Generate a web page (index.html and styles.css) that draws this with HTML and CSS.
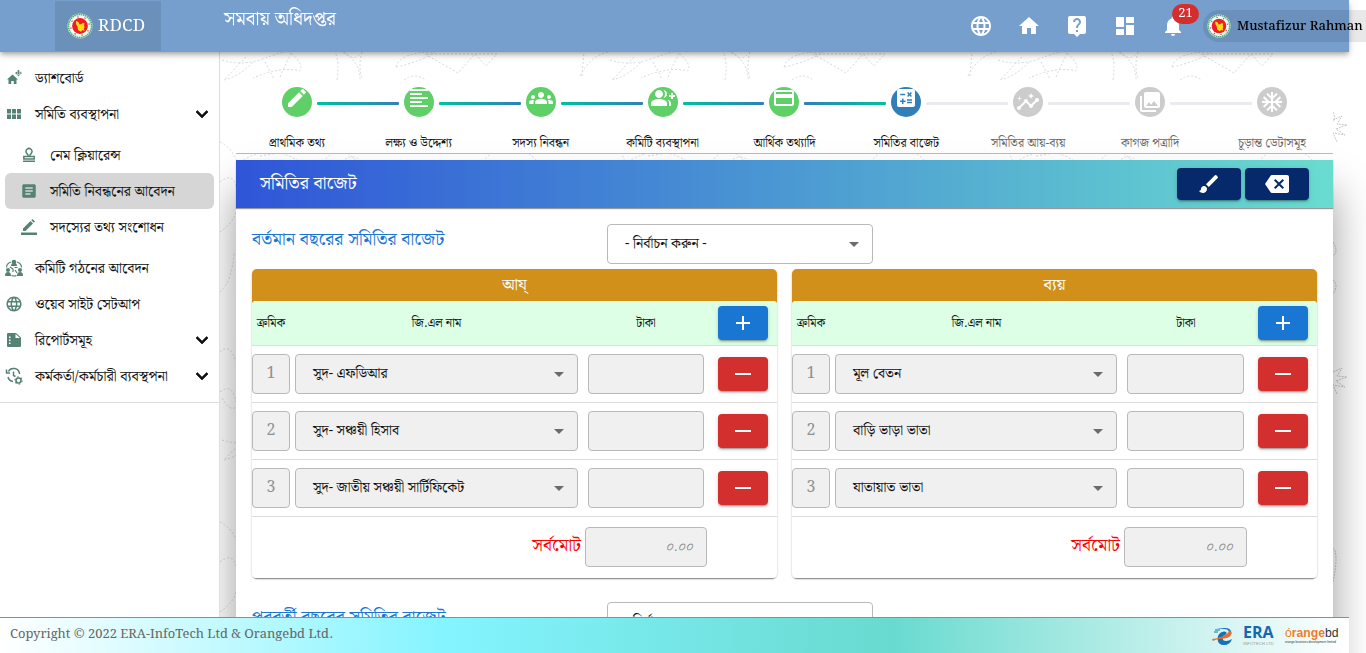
FILE: index.html
```html
<!DOCTYPE html>
<html lang="bn">
<head>
<meta charset="utf-8">
<title>RDCD</title>
<link rel="stylesheet" href="styles.css">
</head>
<body>
<svg class="defs" width="0" height="0">
  <symbol id="globe" viewBox="0 0 24 24"><path d="M11.99 2C6.47 2 2 6.48 2 12s4.47 10 9.99 10C17.52 22 22 17.52 22 12S17.52 2 11.99 2zm6.93 6h-2.95c-.32-1.25-.78-2.45-1.38-3.56 1.84.63 3.37 1.91 4.33 3.56zM12 4.04c.83 1.2 1.48 2.53 1.91 3.96h-3.82c.43-1.43 1.08-2.76 1.91-3.96zM4.26 14C4.1 13.36 4 12.69 4 12s.1-1.36.26-2h3.38c-.08.66-.14 1.32-.14 2s.06 1.34.14 2H4.26zm.82 2h2.95c.32 1.25.78 2.45 1.38 3.56-1.84-.63-3.37-1.9-4.33-3.56zm2.95-8H5.08c.96-1.66 2.49-2.93 4.33-3.56C8.81 5.55 8.35 6.75 8.03 8zM12 19.96c-.83-1.2-1.48-2.53-1.91-3.96h3.82c-.43 1.43-1.08 2.76-1.91 3.96zM14.34 14H9.66c-.09-.66-.16-1.32-.16-2s.07-1.35.16-2h4.68c.09.65.16 1.32.16 2s-.07 1.34-.16 2zm.25 5.56c.6-1.11 1.06-2.31 1.38-3.56h2.95c-.96 1.65-2.49 2.93-4.33 3.56zM16.36 14c.08-.66.14-1.32.14-2s-.06-1.34-.14-2h3.38c.16.64.26 1.31.26 2s-.1 1.36-.26 2h-3.38z"/></symbol>
  <symbol id="pencil" viewBox="0 0 24 24"><path d="M3 17.25V21h3.75L17.81 9.94l-3.75-3.75L3 17.25zM20.71 7.04c.39-.39.39-1.02 0-1.41l-2.34-2.34a.9959.9959 0 0 0-1.41 0l-1.83 1.83 3.75 3.75 1.83-1.83z"/></symbol>
  <symbol id="chev" viewBox="0 0 24 24"><path d="M16.59 8.59L12 13.17 7.41 8.59 6 10l6 6 6-6z" stroke="#111" stroke-width=".7"/></symbol>
  <symbol id="plus" viewBox="0 0 24 24"><path d="M19 13h-6v6h-2v-6H5v-2h6V5h2v6h6z"/></symbol>
  <symbol id="minus" viewBox="0 0 24 24"><path d="M4 11h16v2H4z"/></symbol>
  <symbol id="drop" viewBox="0 0 24 24"><path d="M7 10l5 5 5-5z"/></symbol>
  <symbol id="emblem" viewBox="0 0 26 26">
    <circle cx="13" cy="13" r="12.5" fill="#eaf5ee"/>
    <circle cx="13" cy="13" r="11.6" fill="none" stroke="#4fae79" stroke-width="1.6" stroke-dasharray="1.6 .6"/>
    <circle cx="13" cy="13" r="9.6" fill="#fff"/>
    <circle cx="13" cy="13" r="9.3" fill="none" stroke="#d8404a" stroke-width="1.2" stroke-dasharray="1.4 5.9" stroke-dashoffset="3"/>
    <circle cx="13" cy="13" r="7.9" fill="#ee1c25"/>
    <path d="M9 8l2.5 1 1 2.5 1.5-.3 1.700-1.200 1.800.3-.5 2.500.8 1.500-.8.700.3 3.500-1.300-1.500-1 .5-1 1.200-1.500-.8-1.500-1-.5-3.500-1.500-2.500z" fill="#ffde17"/>
  </symbol>
</svg>

<header class="topbar">
  <a class="brand"><svg class="i26"><use href="#emblem"/></svg><span>RDCD</span></a>
  <h1 class="org">সমবায় অধিদপ্তর</h1>
  <nav class="tools">
    <svg class="i24"><use href="#globe"/></svg>
    <svg class="i24" viewBox="0 0 24 24"><path d="M10 20v-6h4v6h5v-8h3L12 3 2 12h3v8z"/></svg>
    <svg class="i24" viewBox="0 0 24 24"><path d="M19 2H5c-1.110 0-2 .9-2 2v14c0 1.100.89 2 2 2h4l3 3 3-3h4c1.100 0 2-.9 2-2V4c0-1.100-.9-2-2-2zm-6 16h-2v-2h2v2zm2.070-7.750l-.9.920C13.450 11.900 13 12.500 13 14h-2v-.5c0-1.100.45-2.100 1.170-2.830l1.240-1.260c.37-.36.59-.86.59-1.410 0-1.100-.9-2-2-2s-2 .9-2 2H8c0-2.210 1.790-4 4-4s4 1.790 4 4c0 .88-.36 1.680-.93 2.250z"/></svg>
    <svg class="i24" viewBox="0 0 24 24"><path d="M3 13h8V3H3v10zm0 8h8v-6H3v6zm10 0h8V11h-8v10zm0-18v6h8V3h-8z"/></svg>
    <span class="bell"><svg class="i24" viewBox="0 0 24 24"><path d="M12 22c1.100 0 2-.9 2-2h-4c0 1.100.89 2 2 2zm6-6v-5c0-3.070-1.640-5.640-4.500-6.320V4c0-.83-.67-1.500-1.500-1.500s-1.500.67-1.500 1.500v.68C7.630 5.360 6 7.920 6 11v5l-2 2v1h16v-1l-2-2z"/></svg><b class="badge">21</b></span>
  </nav>
  <div class="user"><svg class="i24"><use href="#emblem"/></svg><span>Mustafizur Rahman</span></div>
</header>

<div class="layout">
  <aside class="side">
    <a class="item"><svg class="i16" viewBox="0 0 16 16"><path d="M1 9.500L6.500 4.500 12 9.500h-1.500V14H7.800v-3H5.200v3H2.500V9.500zM12.500-.5l1.500 2h-3zM12.500 6.500l1.500-2h-3zM9 3l2-1.500v3zM16 3l-2-1.500v3zM12 1h1v4h-1zM10.500 2.500h4v1h-4z"/></svg><span>ড্যাশবোর্ড</span></a>
    <a class="item"><svg class="i16" viewBox="0 0 16 16"><path d="M1 3h4v4.500H1zM6 3h4v4.500H6zM11 3h4v4.500h-4zM1 8.500h4V13H1zM6 8.500h4V13H6zM11 8.500h4V13h-4z"/></svg><span>সমিতি ব্যবস্থাপনা</span><svg class="arrow"><use href="#chev"/></svg></a>
    <a class="item sub first"><svg class="i16" viewBox="0 0 16 16"><path d="M2 14.200h12M2.800 12V9.500h10.400V12zM7 9.500V8L5.700 6.200a2.900 2.900 0 1 1 4.600 0L9 8v1.500" fill="none" stroke="#568276" stroke-width="1.500"/></svg><span>নেম ক্লিয়ারেন্স</span></a>
    <a class="item sub on"><svg class="i18" viewBox="0 0 24 24"><path d="M19 3H5c-1.100 0-2 .9-2 2v14c0 1.100.9 2 2 2h14c1.100 0 2-.9 2-2V5c0-1.100-.9-2-2-2zm-5 14H7v-2h7v2zm3-4H7v-2h10v2zm0-4H7V7h10v2z"/></svg><span>সমিতি নিবন্ধনের আবেদন</span></a>
    <a class="item sub"><svg class="i16" viewBox="0 0 16 16"><path d="M0 13.500h16v2.500H0zM2 9.500L9.500 2 12 4.500 4.500 12H2zM10.300 1.300L11.500 0 14 2.500l-1.200 1.300z"/></svg><span>সদস্যের তথ্য সংশোধন</span></a>
    <a class="item gap"><svg class="i18" viewBox="0 0 18 18"><circle cx="9" cy="3" r="2.300"/><path d="M6 7c0-2 1-3 3-3s3 1 3 3z"/><circle cx="3" cy="11" r="2"/><circle cx="15" cy="11" r="2"/><path d="M0 17c0-3 1-4 3-4s3 1 3 4zM12 17c0-3 1-4 3-4s3 1 3 4z"/><path d="M6 3Q1.500 4.500 1.500 8.500M12 3Q16.500 4.500 16.500 8.500M6.500 16.500q2.500 1 5 0M5 8l3 2v3M9.500 8.500h3M10 11l2 3" fill="none" stroke="#568276" stroke-width="1.200"/></svg><span>কমিটি গঠনের আবেদন</span></a>
    <a class="item"><svg class="i18"><use href="#globe"/></svg><span>ওয়েব সাইট সেটআপ</span></a>
    <a class="item"><svg class="i16" viewBox="0 0 16 16"><path fill-rule="evenodd" d="M2 1h8l5 4.500V14q0 1-1 1H2q-1 0-1-1V2q0-1 1-1zM9.500 2v4H14zM3 4.500V6h1.500V4.500zM3 7.500V9h1.500V7.500zM3 10.500V12h1.500v-1.500z"/></svg><span>রিপোর্টসমূহ</span><svg class="arrow"><use href="#chev"/></svg></a>
    <a class="item"><svg class="i18" viewBox="0 0 18 18"><path d="M3.300 4.500A6 6 0 0 1 14.500 7M3 10a6 6 0 0 0 5 4.500M1.500 2.500v3.500H5M8.500 4.500V8.500L10.500 9.500" fill="none" stroke="#568276" stroke-width="1.500"/><circle cx="13.500" cy="13.500" r="2.500" fill="none" stroke="#568276" stroke-width="1.500"/><circle cx="13.500" cy="13.500" r="3.600" fill="none" stroke="#568276" stroke-width="1.200" stroke-dasharray="1.600 2.170"/></svg><span class="wide">কর্মকর্তা/কর্মচারী ব্যবস্থপনা</span><svg class="arrow"><use href="#chev"/></svg></a>
  </aside>

  <main class="main">
    <svg class="doodle" width="1146" height="601">
      <defs><pattern id="leaves" width="388" height="380" patternUnits="userSpaceOnUse">
        <g fill="none" stroke="#d8d8d8" stroke-width="1" stroke-dasharray="2 2">
          <path d="M2 8Q20 14 40 8Q66 -2 70 0Q84 12 80 19Q60 14 33 26M26 5L4 28Q20 24 33 10M60 25Q66 10 72 0M45 10L54 27M117 28Q120 10 115 0M123 0Q140 10 140 27M142 0Q138 14 142 27M124 0Q134 10 140 2"/>
          <path d="M176 15Q180 0 215 0Q200 10 176 15M205 2L238 21L255 2L266 14L277 2H205M184 28Q195 20 205 28M360 24Q370 4 388 0M362 24L364 0"/>
          <circle cx="120" cy="118" r="18"/><circle cx="132" cy="116" r="11"/><circle cx="290" cy="130" r="34"/><path d="M20 110Q50 90 80 110M0 90Q20 100 20 130M40 104L90 96"/>
          <path d="M0 130Q12 120 16 134M0 180Q14 170 16 160M0 240Q12 230 14 200M0 300Q10 290 16 310M0 340Q12 330 16 350M2 346Q10 360 16 355"/>
        </g></pattern></defs>
      <rect width="1100" height="28" fill="url(#leaves)"/>
      <rect y="28" width="1113" height="573" fill="url(#leaves)"/>
      <path d="M1113 60q4 8-1 10M1113 68l9-4-5 8 10 1-11 4 9 6-12-2 4 9M1113 320l9-4-5 8 10 1-11 4 9 6-12-2 4 9M1113 190q6 10 0 14M1113 228q6 5 0 14M1113 496q6 5 0 34" fill="none" stroke="#c8c8c8" stroke-dasharray="2 1"/>
    </svg>
    <ol class="steps">
      <li class="step done"><i><svg><use href="#pencil"/></svg></i>প্রাথমিক তথ্য</li>
      <li class="step done"><i><svg viewBox="0 0 24 24"><path d="M15 15H3v2h12v-2zm0-8H3v2h12V7zM3 13h18v-2H3v2zm0 8h18v-2H3v2zM3 3v2h18V3H3z"/></svg></i>লক্ষ্য ও উদ্দেশ্য</li>
      <li class="step done"><i><svg viewBox="0 0 24 24"><path d="M12 12.750c1.630 0 3.070.39 4.240.9 1.080.48 1.760 1.560 1.760 2.730V18H6v-1.610c0-1.180.68-2.260 1.760-2.730 1.170-.52 2.610-.91 4.240-.91zM4 13c1.100 0 2-.9 2-2s-.9-2-2-2-2 .9-2 2 .9 2 2 2zm1.130 1.100c-.37-.06-.74-.1-1.130-.1-.99 0-1.930.21-2.780.58C.48 14.900 0 15.620 0 16.430V18h4.500v-1.610c0-.83.23-1.610.63-2.290zM20 13c1.100 0 2-.9 2-2s-.9-2-2-2-2 .9-2 2 .9 2 2 2zm4 3.430c0-.81-.48-1.530-1.220-1.850-.85-.37-1.790-.58-2.780-.58-.39 0-.76.04-1.130.1.4.68.63 1.460.63 2.290V18H24v-1.570zM12 6c1.660 0 3 1.340 3 3s-1.340 3-3 3-3-1.340-3-3 1.340-3 3-3z"/></svg></i>সদস্য নিবন্ধন</li>
      <li class="step done"><i><svg viewBox="0 0 24 24"><path d="M22 9V7h-2v2h-2v2h2v2h2v-2h2V9zM8 12c2.210 0 4-1.790 4-4s-1.790-4-4-4-4 1.790-4 4 1.790 4 4 4zm0 1c-2.670 0-8 1.340-8 4v3h16v-3c0-2.660-5.330-4-8-4zm4.510-8.950C13.430 5.110 14 6.490 14 8s-.57 2.890-1.490 3.950C14.470 11.700 16 10.040 16 8s-1.530-3.700-3.490-3.950zm4.020 9.780C17.420 14.660 18 15.700 18 17v3h2v-3c0-1.450-1.590-2.510-3.470-3.170z"/></svg></i>কমিটি ব্যবস্থাপনা</li>
      <li class="step done"><i><svg viewBox="0 0 24 24"><path d="M20 4H4c-1.110 0-1.990.89-1.990 2L2 18c0 1.110.89 2 2 2h16c1.110 0 2-.89 2-2V6c0-1.110-.89-2-2-2zm0 14H4v-6h16v6zm0-10H4V6h16v2z"/></svg></i>আর্থিক তথ্যাদি</li>
      <li class="step now"><i><svg viewBox="0 0 24 24"><path d="M19 3H5c-1.100 0-2 .9-2 2v14c0 1.100.9 2 2 2h14c1.100 0 2-.9 2-2V5c0-1.100-.9-2-2-2zm-5.970 4.060L14.090 6l1.410 1.410L16.910 6l1.060 1.060-1.410 1.410 1.410 1.410-1.060 1.060-1.410-1.400-1.410 1.410-1.060-1.060 1.410-1.410-1.410-1.420zm-6.780.66h5v1.500h-5v-1.500zM11.500 16h-2v2H8v-2H6v-1.500h2v-2h1.500v2h2V16zm6.500 1.250h-5v-1.500h5v1.500zm0-2.500h-5v-1.500h5v1.500z"/></svg></i>সমিতির বাজেট</li>
      <li class="step todo"><i><svg viewBox="0 0 24 24"><path d="M21 8c-1.450 0-2.260 1.440-1.930 2.510l-3.550 3.560c-.3-.09-.74-.09-1.040 0l-2.550-2.550C12.270 10.450 11.460 9 10 9c-1.450 0-2.270 1.440-1.930 2.520l-4.560 4.550C2.440 15.740 1 16.550 1 18c0 1.100.9 2 2 2 1.450 0 2.260-1.440 1.930-2.510l4.550-4.560c.3.090.74.090 1.040 0l2.550 2.550C12.730 16.550 13.540 18 15 18c1.450 0 2.270-1.440 1.930-2.520l3.560-3.550C21.560 12.260 23 11.450 23 10c0-1.100-.9-2-2-2zM15 9l.94-2.070L18 6l-2.060-.93L15 3l-.92 2.070L12 6l2.080.93zM3.500 11L4 9l2-.5L4 8l-.5-2L3 8l-2 .5L3 9z"/></svg></i>সমিতির আয়-ব্যয়</li>
      <li class="step todo"><i><svg viewBox="0 0 24 24"><path d="M22 16V4c0-1.100-.9-2-2-2H8c-1.100 0-2 .9-2 2v12c0 1.100.9 2 2 2h12c1.100 0 2-.9 2-2zm-11-4l2.030 2.710L16 11l4 5H8l3-4zM2 6v14c0 1.100.9 2 2 2h14v-2H4V6H2z"/></svg></i>কাগজ পত্রাদি</li>
      <li class="step todo"><i><svg viewBox="0 0 24 24"><path d="M22 11h-4.170l3.240-3.240-1.410-1.420L15 11h-2V9l4.660-4.660-1.420-1.410L13 6.170V2h-2v4.170L7.760 2.930 6.340 4.340 11 9v2H9L4.340 6.340 2.930 7.760 6.170 11H2v2h4.170l-3.240 3.240 1.410 1.420L9 13h2v2l-4.660 4.660 1.420 1.410L11 17.830V22h2v-4.170l3.240 3.240 1.420-1.410L13 15v-2h2l4.660 4.660 1.410-1.420L17.830 13H22z"/></svg></i>চূড়ান্ত ডেটাসমূহ</li>
    </ol>

    <section class="card">
      <div class="card-head">
        <h2>সমিতির বাজেট</h2>
        <button class="btn navy"><svg class="i24" viewBox="0 0 24 24"><path d="M7 14c-1.660 0-3 1.340-3 3 0 1.310-1.160 2-2 2 .92 1.220 2.490 2 4 2 2.210 0 4-1.790 4-4 0-1.660-1.340-3-3-3zm13.710-9.370l-1.340-1.340a.9959.9959 0 0 0-1.410 0L9 12.250 11.750 15l8.960-8.960c.39-.39.39-1.020 0-1.410z"/></svg></button>
        <button class="btn navy"><svg class="i24" viewBox="0 0 24 24"><path d="M22 3H7c-.69 0-1.230.35-1.590.88L0 12l5.410 8.110c.36.53.9.89 1.590.89h15c1.100 0 2-.9 2-2V5c0-1.100-.9-2-2-2zm-3 12.590L17.590 17 14 13.410 10.410 17 9 15.590 12.590 12 9 8.410 10.410 7 14 10.590 17.590 7 19 8.410 15.410 12 19 15.590z"/></svg></button>
      </div>
      <div class="card-body">
        <div class="year">
          <h3>বর্তমান বছরের সমিতির বাজেট</h3>
          <div class="select pick">- নির্বাচন করুন -<svg class="i24"><use href="#drop"/></svg></div>
        </div>
        <div class="tables">
          <div class="table">
            <div class="title">আয্</div>
            <div class="sheet">
              <div class="thead"><span class="c1">ক্রমিক</span><span class="c2">জি.এল নাম</span><span class="c3">টাকা</span><button class="btn add"><svg class="i24"><use href="#plus"/></svg></button></div>
              <div class="row"><span class="num">1</span><div class="select">সুদ- এফডিআর<svg class="i24"><use href="#drop"/></svg></div><span class="amount"></span><button class="btn del"><svg class="i24"><use href="#minus"/></svg></button></div>
              <div class="row"><span class="num">2</span><div class="select">সুদ- সঞ্চয়ী হিসাব<svg class="i24"><use href="#drop"/></svg></div><span class="amount"></span><button class="btn del"><svg class="i24"><use href="#minus"/></svg></button></div>
              <div class="row"><span class="num">3</span><div class="select">সুদ- জাতীয় সঞ্চয়ী সার্টিফিকেট<svg class="i24"><use href="#drop"/></svg></div><span class="amount"></span><button class="btn del"><svg class="i24"><use href="#minus"/></svg></button></div>
              <div class="total"><b>সর্বমোট</b><span class="sum">০.০০</span></div>
            </div>
          </div>
          <div class="table expense">
            <div class="title">ব্যয়</div>
            <div class="sheet">
              <div class="thead"><span class="c1">ক্রমিক</span><span class="c2">জি.এল নাম</span><span class="c3">টাকা</span><button class="btn add"><svg class="i24"><use href="#plus"/></svg></button></div>
              <div class="row"><span class="num">1</span><div class="select">মূল বেতন<svg class="i24"><use href="#drop"/></svg></div><span class="amount"></span><button class="btn del"><svg class="i24"><use href="#minus"/></svg></button></div>
              <div class="row"><span class="num">2</span><div class="select wide">বাড়ি ভাড়া ভাতা<svg class="i24"><use href="#drop"/></svg></div><span class="amount"></span><button class="btn del"><svg class="i24"><use href="#minus"/></svg></button></div>
              <div class="row"><span class="num">3</span><div class="select wide">যাতায়াত ভাতা<svg class="i24"><use href="#drop"/></svg></div><span class="amount"></span><button class="btn del"><svg class="i24"><use href="#minus"/></svg></button></div>
              <div class="total"><b>সর্বমোট</b><span class="sum">০.০০</span></div>
            </div>
          </div>
        </div>
        <div class="year next">
          <h3>পরবর্তী বছরের সমিতির বাজেট</h3>
          <div class="select pick">- নির্বাচন করুন -<svg class="i24"><use href="#drop"/></svg></div>
        </div>
      </div>
    </section>
  </main>
</div>

<footer class="foot">
  <span class="copy">Copyright © 2022 ERA-InfoTech Ltd &amp; Orangebd Ltd.</span>
  <svg class="swirl" viewBox="0 0 22 20"><path d="M4 2h9q6 0 6.500 5Q19 12 11 12q-1 3 3 3 3 0 6-2-2 6-8 6-6 0-6.500-6Q6 6 12 5.500q3 0 2.500 2-.5 1.500-4 2.500 7-.5 6.500-4-.5-3-5-3z" fill="#1273b8"/><path d="M0 13Q8 12 13 9q4-2 4-5 4 3 1 6-4 3-10 3-4 0-7 2z" fill="#ef6a2a"/><path d="M3 4h5M2 6h4" stroke="#1273b8"/></svg>
  <span class="era"><b>ERA</b><small>INFOTECH LTD</small></span>
  <span class="orange"><span><em>ó</em><b>range</b>bd</span><small>orange business development limited</small></span>
</footer>
</body>
</html>
```
FILE: styles.css
```css
* { box-sizing: border-box; }
html, body { margin: 0; height: 653px; overflow: hidden; }
html { background: #fff; }
body { font-family: "Noto Serif Bengali", "Noto Serif", "DejaVu Serif Condensed", serif; color: #111; font-size: 14px; }
h1, h2, h3, ol { margin: 0; padding: 0; font-weight: 400; }
svg { fill: currentColor; flex: none; }
.defs { position: absolute; }
.i16 { width: 16px; height: 16px; }
.i18 { width: 18px; height: 18px; }
.i24 { width: 24px; height: 24px; }
.i26 { width: 26px; height: 26px; }

.topbar { position: fixed; z-index: 5; top: 0; left: 0; width: 1349px; height: 52px; padding-left: 55px; display: flex; align-items: center; background: #769fce; color: #fff; box-shadow: 0 2px 4px -1px rgba(0,0,0,.2), 0 4px 5px rgba(0,0,0,.14), 0 1px 10px rgba(0,0,0,.12); }
.brand { width: 106px; height: 50px; padding-left: 12px; display: flex; align-items: center; gap: 5px; background: #6b90ba; font-size: 17px; line-height: 22px; }
.brand span { padding-bottom: 1px; letter-spacing: .3px; }
.org { margin: -12px auto 0 63px; font-size: 19px; line-height: 26px; white-space: nowrap; }
.tools { display: flex; gap: 24px; margin-right: 18px; }
.bell { position: relative; display: flex; }
.badge { position: absolute; left: 11px; top: -10px; width: 27px; height: 20px; border-radius: 10px; background: #d32f2f; font: 13px/19px "Noto Serif Bengali", serif; text-align: center; }
.user { flex: none; width: 180px; height: 32px; margin-right: -34px; padding-left: 4px; display: flex; align-items: center; gap: 6px; border-radius: 16px 0 0 16px; background: rgba(0,0,0,.09); color: #000; font-size: 13px; font-weight: 500; white-space: nowrap; }

.layout { display: flex; height: 653px; padding-top: 52px; }
.side { width: 220px; flex: none; padding-top: 8px; border-right: 1px solid #ddd; background: linear-gradient(#ddd, #ddd) 0 350px / 100% 1px no-repeat #fff; }
.item { display: flex; align-items: center; height: 36px; margin: 0 5px; line-height: 24px; white-space: nowrap; }
.item span { padding-top: 2px; }
.item .wide { font-size: 14.3px; }
.item > svg:first-child { color: #568276; width: 18px; margin-right: 12px; }
.item .arrow { width: 24px; height: 24px; margin-left: auto; }
.sub { padding-left: 15px; border-radius: 6px; }
.sub.on { background: #d6d6d6; }
.first, .gap { margin-top: 5px; }

.main { position: relative; flex: 1; padding: 28px 33px 0 16px; overflow: hidden; }
.doodle { position: absolute; left: 0; top: 0; z-index: -1; }
.steps { display: grid; grid-template-columns: repeat(9, 1fr); height: 74px; padding-top: 7px; list-style: none; background: #fff; border-bottom: 1px solid #bbb; }
.step { position: relative; text-align: center; font-size: 12.2px; line-height: 18px; white-space: nowrap; }
.step i { display: block; width: 30px; height: 30px; margin: 0 auto 18px; padding: 0 3px; border-radius: 50%; background: #5fcf67; color: #fff; }
.step i svg { display: block; width: 24px; height: 24px; margin-top: -1px; transform: translateY(-1px); }
.step.now i { background: #317fb9; }
.step.todo i { background: #ccc; }
.step.todo i svg { transform: translateY(3px); }
.step.todo { color: #666; }
.step i svg { margin-top: 0; }
.step:not(:last-child)::after { content: ""; position: absolute; top: 15px; left: calc(50% + 20px); width: calc(100% - 40px); height: 3px; border-radius: 1px; background: #eaeaf0; }
.step.done:not(:last-child)::after { background: linear-gradient(90deg, #00c29c, #317fb9); }
.step.done:nth-child(5)::after { background: linear-gradient(90deg, #317fb9, #00c29c); }

.card { height: 700px; margin-top: 6px; background: #fff; box-shadow: 0 30px 40px rgba(0,0,0,.4); }
.card-head { display: flex; align-items: center; gap: 4px; height: 48px; padding: 0 24px; background: linear-gradient(90deg, #2f55d8, #4b98d2 50%, #69dccf); color: #fff; box-shadow: 0 1px 1px rgba(0,0,0,.4); }
.card-head h2 { margin-right: auto; font-size: 18px; line-height: 26px; }
.btn { display: flex; align-items: center; justify-content: center; flex: none; padding: 0; border: 0; border-radius: 4px; color: #fff; box-shadow: 0 3px 1px -2px rgba(0,0,0,.2), 0 2px 2px rgba(0,0,0,.14), 0 1px 5px rgba(0,0,0,.12); }
.navy { width: 64px; height: 32px; background: #06296b; }
.add, .del { width: 50px; height: 34px; margin-left: 14px; }
.add { background: #1976d2; }
.del { background: #d32f2f; }
.card-body { padding: 16px 16px 0; }
.year { display: flex; height: 40px; margin-bottom: 5px; }
.year h3 { width: 355px; font-size: 17.9px; line-height: 32px; color: #1976d2; }
.select { display: flex; align-items: center; justify-content: space-between; height: 40px; width: 283px; margin-left: 5px; padding: 0 6px 0 17px; border: 1px solid #b9b9b9; border-radius: 4px; background: #f0f0f0; line-height: 24px; white-space: nowrap; }
.select.wide { font-size: 14.4px; }
.select svg { color: #6b6b6b; }
.select.pick { width: 266px; margin: 0; background: #fff; }
.tables { display: grid; grid-template-columns: 525px 525px; gap: 15px; }
.table { border-radius: 5px; background: #d09019; box-shadow: 0 2px 1px -1px rgba(0,0,0,.3), 0 1px 2px rgba(0,0,0,.3); }
.title { height: 32px; line-height: 32px; text-align: center; font-size: 16.5px; color: #fff; }
.sheet { height: 277px; border-radius: 4px; overflow: hidden; background: #fff; }
.thead { display: flex; align-items: center; height: 45px; background: #dcffe6; border-bottom: 1px solid #ddd; font-size: 12.1px; text-align: center; }
.thead span { line-height: 20px; padding-top: 2px; }
.c1 { width: 38px; }
.c2 { width: 283px; margin-left: 5px; }
.c3 { width: 116px; margin-left: 10px; }
.row { display: flex; align-items: center; height: 57px; border-bottom: 1px solid #ddd; }
.num, .amount, .sum { height: 40px; border: 1px solid #b9b9b9; border-radius: 4px; background: #f0f0f0; color: #919191; line-height: 37px; }
.num { width: 38px; text-align: center; font-size: 16px; }
.amount { width: 116px; margin-left: 10px; }
.expense .select { width: 282px; }
.expense .amount { width: 117px; }
.total { display: flex; justify-content: flex-end; padding: 10px 70px 0 0; }
.total b { margin-right: 4px; font-size: 17.6px; font-weight: 400; line-height: 38px; color: #f00; }
.sum { width: 122px; padding-right: 13px; text-align: right; font-size: 13px; line-height: 39px; font-style: italic; }
.expense .sum { width: 123px; }
.year.next { margin-top: 24px; }

.foot { position: fixed; z-index: 4; left: 0; bottom: 0; width: 1349px; height: 36px; padding: 0 11px 0 10px; display: flex; align-items: center; border-top: 1px solid #8d8d8d; background: linear-gradient(90deg, #fff, #84f4ff 33%, #68dacf 66%, #fff); color: #666; }
.copy { margin-right: auto; padding-bottom: 2px; font-size: 12.95px; }
.swirl { width: 22px; height: 20px; margin-right: 9px; }
.era, .orange { display: flex; flex-direction: column; font-family: "Liberation Sans", sans-serif; white-space: nowrap; }
.era { width: 32px; margin-right: 10px; }
.era b { font: 700 16px/15px "Open Sans", sans-serif; color: #1768b0; }
.era small { font-size: 4.3px; line-height: 5px; margin-top: 1px; color: #999; }
.orange { width: 53px; color: #333; font-size: 12.2px; line-height: 13px; }
.orange b, .orange em { color: #ef7d28; font-style: normal; }
.orange em { font-weight: 400; }
.orange small { font-size: 3.1px; line-height: 5px; }
```
